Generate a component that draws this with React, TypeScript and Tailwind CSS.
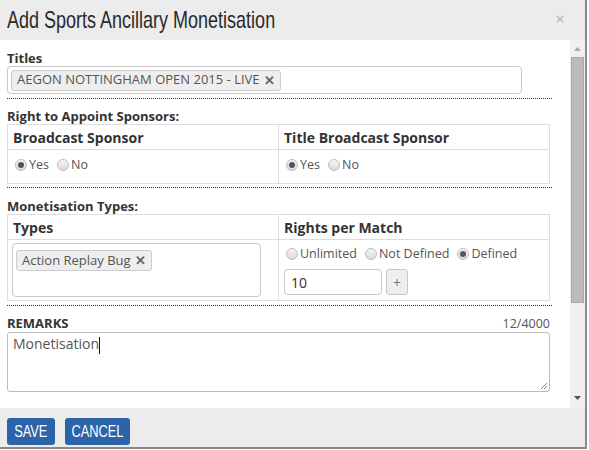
import React from "react";

const body = { fontFamily: '"Open Sans", "Liberation Sans", sans-serif' };
const cond = { fontFamily: '"Liberation Sans", Arial, sans-serif' };

function Radio({ checked, label }: { checked?: boolean; label: string }) {
  return (
    <span className="inline-flex items-center gap-[2px] text-[12.5px] leading-[16px] text-[#555]">
      <span className="w-[12px] h-[12px] rounded-full border border-[#bcbcbc] bg-gradient-to-b from-[#f6f6f6] to-[#dadada] flex items-center justify-center">
        {checked && <span className="w-[6px] h-[6px] rounded-full bg-[#555]" />}
      </span>
      <span>{label}</span>
    </span>
  );
}

function Tag({ text }: { text: string }) {
  return (
    <span className="inline-flex items-center h-[21px] px-[5px] gap-[4px] bg-[#eeeeee] border border-[#cccccc] rounded-[3px] text-[13px] text-[#555]">
      <span>{text}</span>
      <span className="text-[#666] text-[13px] font-bold leading-none">✕</span>
    </span>
  );
}

function Dotted({ mt }: { mt: string }) {
  return <div className={`border-b border-dotted border-[#333] w-[545px] ${mt}`} />;
}

export default function App() {
  return (
    <div className="w-[589px] h-[450px] bg-white" style={body}>
      <div className="w-[587px] h-[449px] border-r-2 border-b-2 border-[#8a8a8a] bg-[#ececec] flex flex-col">
        <div className="h-[40px] flex items-center justify-between pl-[7px] pr-[20px]">
          <span className="inline-block text-[24px] leading-[28px] text-[#2a2a2a] origin-left scale-x-[0.75] whitespace-nowrap" style={cond}>
            Add Sports Ancillary Monetisation
          </span>
          <span className="text-[#b4b4b4] text-[17px] leading-none mb-[3px]">×</span>
        </div>
        <div className="flex h-[368px]">
          <div className="w-[570px] bg-white pl-[7px] pr-[20px] pt-[10px] text-[#333]">
            <div className="text-[13px] font-bold leading-[16px]">Titles</div>
            <div className="w-[515px] h-[28px] border border-[#c8c8c8] rounded-[4px] flex items-center pl-[3px]">
              <Tag text="AEGON NOTTINGHAM OPEN 2015 - LIVE" />
            </div>
            <Dotted mt="mt-[4px]" />

            <div className="text-[13px] font-bold leading-[16px] mt-[9px]">Right to Appoint Sponsors:</div>
            <div className="w-[543px] border border-[#dddddd] grid grid-cols-[271px_1fr]">
              <div className="border-r border-b border-[#dddddd] px-[5px] h-[25px] flex items-center text-[14px] font-bold">Broadcast Sponsor</div>
              <div className="border-b border-[#dddddd] px-[5px] h-[25px] flex items-center text-[14px] font-bold">Title Broadcast Sponsor</div>
              <div className="border-r border-[#dddddd] px-[7px] h-[33px] flex items-start pt-[7px] gap-[8px]">
                <Radio checked label="Yes" />
                <Radio label="No" />
              </div>
              <div className="px-[7px] h-[33px] flex items-start pt-[7px] gap-[8px]">
                <Radio checked label="Yes" />
                <Radio label="No" />
              </div>
            </div>
            <Dotted mt="mt-[3px]" />

            <div className="text-[13px] font-bold leading-[16px] mt-[10px]">Monetisation Types:</div>
            <div className="w-[543px] border border-[#dddddd] grid grid-cols-[271px_1fr]">
              <div className="border-r border-b border-[#dddddd] px-[5px] h-[25px] flex items-center text-[14px] font-bold">Types</div>
              <div className="border-b border-[#dddddd] px-[5px] h-[25px] flex items-center text-[14px] font-bold">Rights per Match</div>
              <div className="border-r border-[#dddddd] px-[4px] h-[60px] pt-[3px]">
                <div className="w-[249px] h-[54px] border border-[#c8c8c8] rounded-[4px] p-[3px]">
                  <Tag text="Action Replay Bug" />
                </div>
              </div>
              <div className="px-[7px] h-[60px] pt-[6px]">
                <div className="flex gap-[8px]">
                  <Radio label="Unlimited" />
                  <Radio label="Not Defined" />
                  <Radio checked label="Defined" />
                </div>
                <div className="flex gap-[4px] mt-[7px] -ml-[2px]">
                  <div className="w-[98px] h-[26px] border border-[#c8c8c8] rounded-[4px] flex items-center px-[6px] text-[14px] text-[#333]">10</div>
                  <div className="w-[22px] h-[26px] border border-[#c8c8c8] rounded-[3px] bg-[#eeeeee] flex items-center justify-center text-[14px] text-[#777]">+</div>
                </div>
              </div>
            </div>
            <Dotted mt="mt-[4px]" />

            <div className="flex justify-between items-center w-[543px] mt-[10px] h-[16px]">
              <span className="text-[13px] font-bold">REMARKS</span>
              <span className="text-[12.5px] text-[#555]">12/4000</span>
            </div>
            <div className="relative w-[543px] h-[60px] border border-[#bbbbbb] rounded-[3px] px-[5px] text-[14px] text-[#555]">
              <span>Monetisation</span>
              <span className="inline-block w-[1px] h-[17px] bg-[#111] align-middle" />
              <svg className="absolute right-[1px] bottom-[1px]" width="8" height="8" viewBox="0 0 8 8">
                <path d="M7 1 L1 7 M7 4 L4 7" stroke="#888" strokeWidth="1" />
              </svg>
            </div>
          </div>
          <div className="w-[15px] bg-[#f0f0f0] flex flex-col items-center">
            <div className="h-[17px] flex items-center justify-center">
              <svg width="7" height="4" viewBox="0 0 7 4"><path d="M0 4 L3.5 0 L7 4 Z" fill="#a8a8a8" /></svg>
            </div>
            <div className="w-[13px] h-[246px] bg-[#bcbcbc] border border-[#a9a9a9]" />
            <div className="flex-1" />
            <div className="h-[20px] flex items-center justify-center">
              <svg width="7" height="4" viewBox="0 0 7 4"><path d="M0 0 L7 0 L3.5 4 Z" fill="#555" /></svg>
            </div>
          </div>
        </div>
        <div className="flex-1 flex items-start pt-[10px] pl-[7px] gap-[10px]">
          <button className="w-[48px] h-[27px] rounded-[3px] bg-[#2b64a8] text-white flex items-center justify-center">
            <span className="inline-block text-[16px] scale-x-[0.8]" style={cond}>SAVE</span>
          </button>
          <button className="w-[65px] h-[27px] rounded-[3px] bg-[#2b64a8] text-white flex items-center justify-center">
            <span className="inline-block text-[16px] scale-x-[0.8]" style={cond}>CANCEL</span>
          </button>
        </div>
      </div>
    </div>
  );
}
